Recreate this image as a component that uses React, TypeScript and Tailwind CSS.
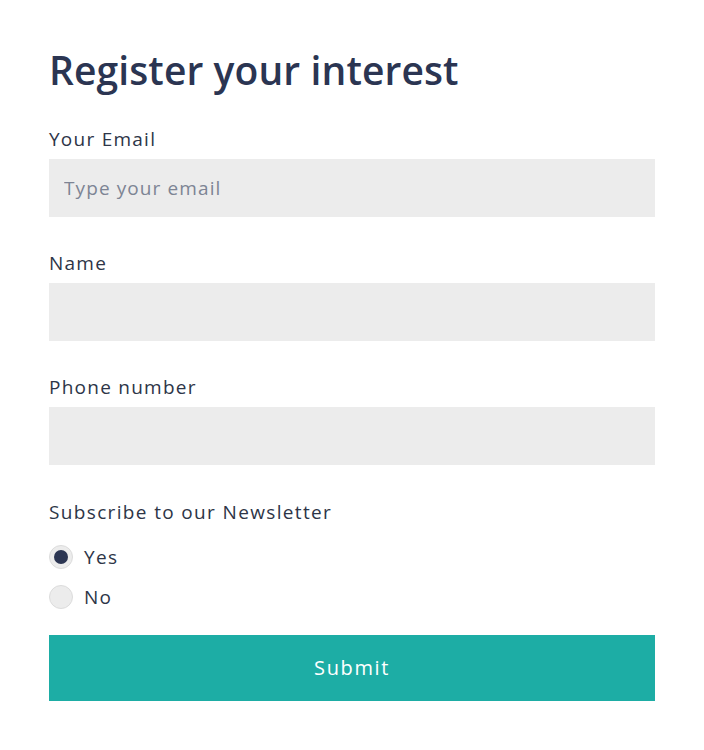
import { useState } from "react";

const font = { fontFamily: '"Open Sans", "Liberation Sans", sans-serif' };

const Field = ({ label, placeholder }: { label: string; placeholder?: string }) => (
  <div className="flex flex-col">
    <label className="text-[19px] leading-[24px] text-[#2d3547] tracking-[1.25px]">{label}</label>
    <input
      className="mt-[8px] h-[58px] w-full bg-[#ececec] px-[15px] text-[19px] tracking-[1.1px] text-[#2d3547] placeholder:text-[#7d8494] outline-none"
      placeholder={placeholder}
    />
  </div>
);

const Radio = ({ label, checked, onClick }: { label: string; checked: boolean; onClick: () => void }) => (
  <button type="button" onClick={onClick} className="flex h-[24px] items-center gap-[11px]">
    <span className="flex h-[24px] w-[24px] items-center justify-center rounded-full border border-[#dcdcdc] bg-[#ececec]">
      {checked && <span className="h-[14px] w-[14px] rounded-full bg-[#2b3552]" />}
    </span>
    <span className="text-[19px] tracking-[1.3px] text-[#2d3547]">{label}</span>
  </button>
);

export default function App() {
  const [sub, setSub] = useState(true);
  return (
    <div style={font} className="min-h-[750px] w-[704px] bg-white px-[49px] pt-[46px]">
      <h1 className="text-[39px] font-semibold leading-[48px] tracking-[0.1px] text-[#2b3552]">Register your interest</h1>
      <form className="mt-[33px] flex flex-col gap-[34px]" onSubmit={(e) => e.preventDefault()}>
        <Field label="Your Email" placeholder="Type your email" />
        <Field label="Name" />
        <Field label="Phone number" />
      </form>
      <div className="mt-[35px] text-[19px] leading-[24px] tracking-[1.35px] text-[#2d3547]">Subscribe to our Newsletter</div>
      <div className="mt-[21px] flex flex-col items-start gap-[16px]">
        <Radio label="Yes" checked={sub} onClick={() => setSub(true)} />
        <Radio label="No" checked={!sub} onClick={() => setSub(false)} />
      </div>
      <button type="button" className="mt-[26px] h-[66px] w-full bg-[#1dada5] text-[20px] tracking-[1.6px] text-white">
        Submit
      </button>
    </div>
  );
}
